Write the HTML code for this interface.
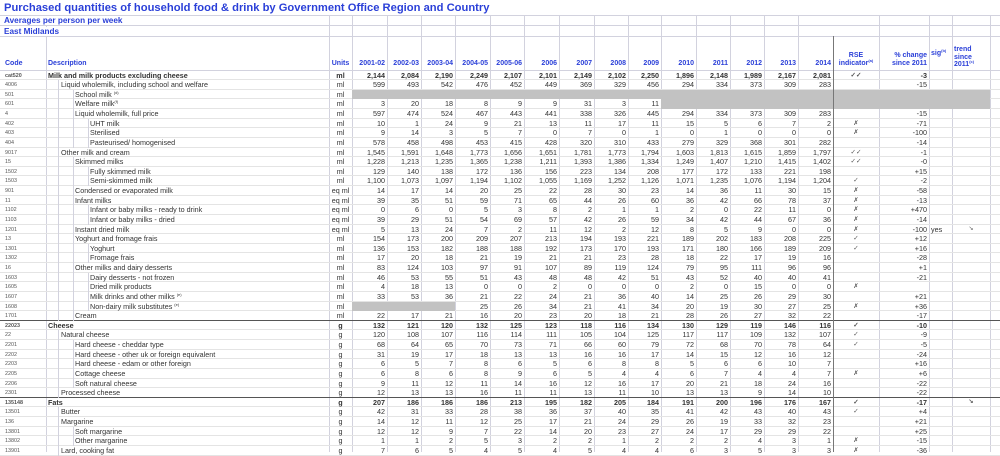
<!DOCTYPE html>
<html><head><meta charset="utf-8"><style>
body{margin:0;width:1000px;height:452px;overflow:hidden;background:#fff;font-family:"Liberation Sans",Arial,sans-serif;position:relative}
.vl{position:absolute;top:15px;bottom:0;width:1px;background:#d2d2de}
.hl{position:absolute;left:0;width:1000px;height:1px;background:#d2d2de}
.tt{position:absolute;left:4px;color:#2a3fd8;font-weight:bold;background:#fff;white-space:nowrap;padding-right:2px}
#d{position:absolute;top:70.5px;left:0;width:1000px}
.r{display:flex;height:9.64px;line-height:9.9px;font-size:7.2px;color:#333;box-shadow:inset 0 -1px 0 #e4e4e4}
.r>i{flex:none;font-style:normal;white-space:nowrap;box-sizing:border-box;overflow:visible;height:9.64px}
.r>i:nth-child(1){width:46px;font-size:5.4px;color:#555;padding-left:5px;line-height:10.5px}
.r>i:nth-child(2){width:283px;padding-left:2px}
.r>i:nth-child(3){width:23px;text-align:center}
.r>i:nth-child(4),.r>i:nth-child(7),.r>i:nth-child(9),.r>i:nth-child(10),.r>i:nth-child(13),.r>i:nth-child(17){width:35px}
.r>i:nth-child(5),.r>i:nth-child(6),.r>i:nth-child(8),.r>i:nth-child(11),.r>i:nth-child(14),.r>i:nth-child(15),.r>i:nth-child(16){width:34px}
.r>i:nth-child(12){width:33px}
.r>i:nth-child(n+4):nth-child(-n+17){text-align:right;padding-right:2px}
.r>i:nth-child(18){width:46px;text-align:center;font-size:6.5px;color:#555}
.r>i:nth-child(19){width:50px;text-align:right;padding-right:2px}
.r>i:nth-child(20){width:23px;padding-left:2px}
.r>i:nth-child(21){width:38px;text-align:center;font-size:6px;color:#666}
.r>i.g{background:#c2c2c2}
.b{font-weight:bold}
.r>i.l1{padding-left:15px;background:linear-gradient(#d2d2de,#d2d2de) 12px 0/1px 100% no-repeat}
.r>i.l2{padding-left:29px;background:linear-gradient(#d2d2de,#d2d2de) 12px 0/1px 100% no-repeat,linear-gradient(#d2d2de,#d2d2de) 27px 0/1px 100% no-repeat}
.r>i.l3{padding-left:44px;background:linear-gradient(#d2d2de,#d2d2de) 12px 0/1px 100% no-repeat,linear-gradient(#d2d2de,#d2d2de) 27px 0/1px 100% no-repeat,linear-gradient(#d2d2de,#d2d2de) 42px 0/1px 100% no-repeat}
.t{box-shadow:inset 0 -1px 0 #555}
sup{font-size:4px;vertical-align:3px;line-height:0}
#h{position:absolute;top:36px;left:0;height:34px;display:flex;align-items:flex-end;font-size:7px;font-weight:bold;color:#2a3fd8}
#h>span{flex:none;box-sizing:border-box;padding-bottom:3px;line-height:7.5px}
.y{text-align:right;padding-right:2px}
</style></head><body>
<div class="vl" style="left:46px"></div><div class="vl" style="left:329px"></div><div class="vl" style="left:352px"></div>
<div class="vl" style="left:387px"></div><div class="vl" style="left:421px"></div><div class="vl" style="left:455px"></div>
<div class="vl" style="left:490px"></div><div class="vl" style="left:524px"></div><div class="vl" style="left:559px"></div>
<div class="vl" style="left:594px"></div><div class="vl" style="left:628px"></div><div class="vl" style="left:661px"></div>
<div class="vl" style="left:696px"></div><div class="vl" style="left:730px"></div><div class="vl" style="left:764px"></div>
<div class="vl" style="left:798px"></div><div class="vl" style="left:879px"></div>
<div class="vl" style="left:929px"></div><div class="vl" style="left:952px"></div><div class="vl" style="left:990px"></div>
<div class="hl" style="top:15px"></div><div class="hl" style="top:25px"></div><div class="hl" style="top:36px"></div><div class="hl" style="top:70px"></div>
<div class="tt" style="top:1.5px;font-size:11.2px;line-height:13px">Purchased quantities of household food &amp; drink by Government Office Region and Country</div>
<div class="tt" style="top:16px;font-size:8.2px;line-height:9px">Averages per person per week</div>
<div class="tt" style="top:26.5px;font-size:8.2px;line-height:9px">East Midlands</div>
<div id="h">
<span style="width:46px;padding-left:5px">Code</span><span style="width:283px;padding-left:2px">Description</span><span style="width:23px;text-align:center">Units</span>
<span class="y" style="width:35px">2001-02</span><span class="y" style="width:34px">2002-03</span><span class="y" style="width:34px">2003-04</span><span class="y" style="width:35px">2004-05</span><span class="y" style="width:34px">2005-06</span><span class="y" style="width:35px">2006</span><span class="y" style="width:35px">2007</span><span class="y" style="width:34px">2008</span><span class="y" style="width:33px">2009</span><span class="y" style="width:35px">2010</span><span class="y" style="width:34px">2011</span><span class="y" style="width:34px">2012</span><span class="y" style="width:34px">2013</span><span class="y" style="width:35px">2014</span>
<span style="width:46px;text-align:center">RSE<br>indicator<sup>(a)</sup></span><span class="y" style="width:50px">% change<br>since 2011</span>
<span style="width:23px;align-self:flex-start;padding:14px 0 0 2px">sig<sup>(b)</sup></span><span style="width:38px;align-self:flex-start;padding:10px 0 0 2px">trend<br>since<br>2011<sup>(c)</sup></span>
</div>
<div id="d">
<div class="r b"><i class="b">cat520</i><i>Milk and milk products excluding cheese</i><i>ml</i><i>2,144</i><i>2,084</i><i>2,190</i><i>2,249</i><i>2,107</i><i>2,101</i><i>2,149</i><i>2,102</i><i>2,250</i><i>1,896</i><i>2,148</i><i>1,989</i><i>2,167</i><i>2,081</i><i>✓✓</i><i>-3</i></div>
<div class="r"><i>4006</i><i class="l1">Liquid wholemilk, including school and welfare</i><i>ml</i><i>599</i><i>493</i><i>542</i><i>476</i><i>452</i><i>449</i><i>369</i><i>329</i><i>456</i><i>294</i><i>334</i><i>373</i><i>309</i><i>283</i><i></i><i>-15</i></div>
<div class="r"><i>501</i><i class="l2">School milk <sup>(d)</sup></i><i>ml</i><i class="g"></i><i class="g"></i><i class="g"></i><i class="g"></i><i class="g"></i><i class="g"></i><i class="g"></i><i class="g"></i><i class="g"></i><i class="g"></i><i class="g"></i><i class="g"></i><i class="g"></i><i class="g"></i><i class="g"></i><i class="g"></i><i class="g"></i><i class="g"></i></div>
<div class="r"><i>601</i><i class="l2">Welfare milk<sup>(f)</sup></i><i>ml</i><i>3</i><i>20</i><i>18</i><i>8</i><i>9</i><i>9</i><i>31</i><i>3</i><i>11</i><i class="g"></i><i class="g"></i><i class="g"></i><i class="g"></i><i class="g"></i><i class="g"></i><i class="g"></i><i class="g"></i><i class="g"></i></div>
<div class="r"><i>4</i><i class="l2">Liquid wholemilk, full price</i><i>ml</i><i>597</i><i>474</i><i>524</i><i>467</i><i>443</i><i>441</i><i>338</i><i>326</i><i>445</i><i>294</i><i>334</i><i>373</i><i>309</i><i>283</i><i></i><i>-15</i></div>
<div class="r"><i>402</i><i class="l3">UHT milk</i><i>ml</i><i>10</i><i>1</i><i>24</i><i>9</i><i>21</i><i>13</i><i>11</i><i>17</i><i>11</i><i>15</i><i>5</i><i>6</i><i>7</i><i>2</i><i>✗</i><i>-71</i></div>
<div class="r"><i>403</i><i class="l3">Sterilised</i><i>ml</i><i>9</i><i>14</i><i>3</i><i>5</i><i>7</i><i>0</i><i>7</i><i>0</i><i>1</i><i>0</i><i>1</i><i>0</i><i>0</i><i>0</i><i>✗</i><i>-100</i></div>
<div class="r"><i>404</i><i class="l3">Pasteurised/ homogenised</i><i>ml</i><i>578</i><i>458</i><i>498</i><i>453</i><i>415</i><i>428</i><i>320</i><i>310</i><i>433</i><i>279</i><i>329</i><i>368</i><i>301</i><i>282</i><i></i><i>-14</i></div>
<div class="r"><i>9017</i><i class="l1">Other milk and cream</i><i>ml</i><i>1,545</i><i>1,591</i><i>1,648</i><i>1,773</i><i>1,656</i><i>1,651</i><i>1,781</i><i>1,773</i><i>1,794</i><i>1,603</i><i>1,813</i><i>1,615</i><i>1,859</i><i>1,797</i><i>✓✓</i><i>-1</i></div>
<div class="r"><i>15</i><i class="l2">Skimmed milks</i><i>ml</i><i>1,228</i><i>1,213</i><i>1,235</i><i>1,365</i><i>1,238</i><i>1,211</i><i>1,393</i><i>1,386</i><i>1,334</i><i>1,249</i><i>1,407</i><i>1,210</i><i>1,415</i><i>1,402</i><i>✓✓</i><i>-0</i></div>
<div class="r"><i>1502</i><i class="l3">Fully skimmed milk</i><i>ml</i><i>129</i><i>140</i><i>138</i><i>172</i><i>136</i><i>156</i><i>223</i><i>134</i><i>208</i><i>177</i><i>172</i><i>133</i><i>221</i><i>198</i><i></i><i>+15</i></div>
<div class="r"><i>1503</i><i class="l3">Semi-skimmed milk</i><i>ml</i><i>1,100</i><i>1,073</i><i>1,097</i><i>1,194</i><i>1,102</i><i>1,055</i><i>1,169</i><i>1,252</i><i>1,126</i><i>1,071</i><i>1,235</i><i>1,076</i><i>1,194</i><i>1,204</i><i>✓</i><i>-2</i></div>
<div class="r"><i>901</i><i class="l2">Condensed or evaporated milk</i><i>eq ml</i><i>14</i><i>17</i><i>14</i><i>20</i><i>25</i><i>22</i><i>28</i><i>30</i><i>23</i><i>14</i><i>36</i><i>11</i><i>30</i><i>15</i><i>✗</i><i>-58</i></div>
<div class="r"><i>11</i><i class="l2">Infant milks</i><i>eq ml</i><i>39</i><i>35</i><i>51</i><i>59</i><i>71</i><i>65</i><i>44</i><i>26</i><i>60</i><i>36</i><i>42</i><i>66</i><i>78</i><i>37</i><i>✗</i><i>-13</i></div>
<div class="r"><i>1102</i><i class="l3">Infant or baby milks - ready to drink</i><i>eq ml</i><i>0</i><i>6</i><i>0</i><i>5</i><i>3</i><i>8</i><i>2</i><i>1</i><i>1</i><i>2</i><i>0</i><i>22</i><i>11</i><i>0</i><i>✗</i><i>+470</i></div>
<div class="r"><i>1103</i><i class="l3">Infant or baby milks - dried</i><i>eq ml</i><i>39</i><i>29</i><i>51</i><i>54</i><i>69</i><i>57</i><i>42</i><i>26</i><i>59</i><i>34</i><i>42</i><i>44</i><i>67</i><i>36</i><i>✗</i><i>-14</i></div>
<div class="r"><i>1201</i><i class="l2">Instant dried milk</i><i>eq ml</i><i>5</i><i>13</i><i>24</i><i>7</i><i>2</i><i>11</i><i>12</i><i>2</i><i>12</i><i>8</i><i>5</i><i>9</i><i>0</i><i>0</i><i>✗</i><i>-100</i><i>yes</i><i>↘</i></div>
<div class="r"><i>13</i><i class="l2">Yoghurt and fromage frais</i><i>ml</i><i>154</i><i>173</i><i>200</i><i>209</i><i>207</i><i>213</i><i>194</i><i>193</i><i>221</i><i>189</i><i>202</i><i>183</i><i>208</i><i>225</i><i>✓</i><i>+12</i></div>
<div class="r"><i>1301</i><i class="l3">Yoghurt</i><i>ml</i><i>136</i><i>153</i><i>182</i><i>188</i><i>188</i><i>192</i><i>173</i><i>170</i><i>193</i><i>171</i><i>180</i><i>166</i><i>189</i><i>209</i><i>✓</i><i>+16</i></div>
<div class="r"><i>1302</i><i class="l3">Fromage frais</i><i>ml</i><i>17</i><i>20</i><i>18</i><i>21</i><i>19</i><i>21</i><i>21</i><i>23</i><i>28</i><i>18</i><i>22</i><i>17</i><i>19</i><i>16</i><i></i><i>-28</i></div>
<div class="r"><i>16</i><i class="l2">Other milks and dairy desserts</i><i>ml</i><i>83</i><i>124</i><i>103</i><i>97</i><i>91</i><i>107</i><i>89</i><i>119</i><i>124</i><i>79</i><i>95</i><i>111</i><i>96</i><i>96</i><i></i><i>+1</i></div>
<div class="r"><i>1603</i><i class="l3">Dairy desserts - not frozen</i><i>ml</i><i>46</i><i>53</i><i>55</i><i>51</i><i>43</i><i>48</i><i>48</i><i>42</i><i>51</i><i>43</i><i>52</i><i>40</i><i>40</i><i>41</i><i></i><i>-21</i></div>
<div class="r"><i>1605</i><i class="l3">Dried milk products</i><i>ml</i><i>4</i><i>18</i><i>13</i><i>0</i><i>0</i><i>2</i><i>0</i><i>0</i><i>0</i><i>2</i><i>0</i><i>15</i><i>0</i><i>0</i><i>✗</i><i></i></div>
<div class="r"><i>1607</i><i class="l3">Milk drinks and other milks <sup>(e)</sup></i><i>ml</i><i>33</i><i>53</i><i>36</i><i>21</i><i>22</i><i>24</i><i>21</i><i>36</i><i>40</i><i>14</i><i>25</i><i>26</i><i>29</i><i>30</i><i></i><i>+21</i></div>
<div class="r"><i>1608</i><i class="l3">Non-dairy milk substitutes <sup>(e)</sup></i><i>ml</i><i class="g"></i><i class="g"></i><i class="g"></i><i>25</i><i>26</i><i>34</i><i>21</i><i>41</i><i>34</i><i>20</i><i>19</i><i>30</i><i>27</i><i>25</i><i>✗</i><i>+36</i></div>
<div class="r t"><i>1701</i><i class="l2">Cream</i><i>ml</i><i>22</i><i>17</i><i>21</i><i>16</i><i>20</i><i>23</i><i>20</i><i>18</i><i>21</i><i>28</i><i>26</i><i>27</i><i>32</i><i>22</i><i></i><i>-17</i></div>
<div class="r b"><i class="b">22023</i><i>Cheese</i><i>g</i><i>132</i><i>121</i><i>120</i><i>132</i><i>125</i><i>123</i><i>118</i><i>116</i><i>134</i><i>130</i><i>129</i><i>119</i><i>146</i><i>116</i><i>✓</i><i>-10</i></div>
<div class="r"><i>22</i><i class="l1">Natural cheese</i><i>g</i><i>120</i><i>108</i><i>107</i><i>116</i><i>114</i><i>111</i><i>105</i><i>104</i><i>125</i><i>117</i><i>117</i><i>109</i><i>132</i><i>107</i><i>✓</i><i>-9</i></div>
<div class="r"><i>2201</i><i class="l2">Hard cheese - cheddar type</i><i>g</i><i>68</i><i>64</i><i>65</i><i>70</i><i>73</i><i>71</i><i>66</i><i>60</i><i>79</i><i>72</i><i>68</i><i>70</i><i>78</i><i>64</i><i>✓</i><i>-5</i></div>
<div class="r"><i>2202</i><i class="l2">Hard cheese - other uk or foreign equivalent</i><i>g</i><i>31</i><i>19</i><i>17</i><i>18</i><i>13</i><i>13</i><i>16</i><i>16</i><i>17</i><i>14</i><i>15</i><i>12</i><i>16</i><i>12</i><i></i><i>-24</i></div>
<div class="r"><i>2203</i><i class="l2">Hard cheese - edam or other foreign</i><i>g</i><i>6</i><i>5</i><i>7</i><i>8</i><i>6</i><i>5</i><i>6</i><i>8</i><i>8</i><i>5</i><i>6</i><i>6</i><i>10</i><i>7</i><i></i><i>+16</i></div>
<div class="r"><i>2205</i><i class="l2">Cottage cheese</i><i>g</i><i>6</i><i>8</i><i>6</i><i>8</i><i>9</i><i>6</i><i>5</i><i>4</i><i>4</i><i>6</i><i>7</i><i>4</i><i>4</i><i>7</i><i>✗</i><i>+6</i></div>
<div class="r"><i>2206</i><i class="l2">Soft natural cheese</i><i>g</i><i>9</i><i>11</i><i>12</i><i>11</i><i>14</i><i>16</i><i>12</i><i>16</i><i>17</i><i>20</i><i>21</i><i>18</i><i>24</i><i>16</i><i></i><i>-22</i></div>
<div class="r t"><i>2301</i><i class="l1">Processed cheese</i><i>g</i><i>12</i><i>13</i><i>13</i><i>16</i><i>11</i><i>11</i><i>13</i><i>11</i><i>10</i><i>13</i><i>13</i><i>9</i><i>14</i><i>10</i><i></i><i>-22</i></div>
<div class="r b"><i class="b">135148</i><i>Fats</i><i>g</i><i>207</i><i>186</i><i>186</i><i>186</i><i>213</i><i>195</i><i>182</i><i>205</i><i>184</i><i>191</i><i>200</i><i>196</i><i>176</i><i>167</i><i>✓</i><i>-17</i><i></i><i>↘</i></div>
<div class="r"><i>13501</i><i class="l1">Butter</i><i>g</i><i>42</i><i>31</i><i>33</i><i>28</i><i>38</i><i>36</i><i>37</i><i>40</i><i>35</i><i>41</i><i>42</i><i>43</i><i>40</i><i>43</i><i>✓</i><i>+4</i></div>
<div class="r"><i>136</i><i class="l1">Margarine</i><i>g</i><i>14</i><i>12</i><i>11</i><i>12</i><i>25</i><i>17</i><i>21</i><i>24</i><i>29</i><i>26</i><i>19</i><i>33</i><i>32</i><i>23</i><i></i><i>+21</i></div>
<div class="r"><i>13801</i><i class="l2">Soft margarine</i><i>g</i><i>12</i><i>12</i><i>9</i><i>7</i><i>22</i><i>14</i><i>20</i><i>23</i><i>27</i><i>24</i><i>17</i><i>29</i><i>29</i><i>22</i><i></i><i>+25</i></div>
<div class="r"><i>13802</i><i class="l2">Other margarine</i><i>g</i><i>1</i><i>1</i><i>2</i><i>5</i><i>3</i><i>2</i><i>2</i><i>1</i><i>2</i><i>2</i><i>2</i><i>4</i><i>3</i><i>1</i><i>✗</i><i>-15</i></div>
<div class="r"><i>13901</i><i class="l1">Lard, cooking fat</i><i>g</i><i>7</i><i>6</i><i>5</i><i>4</i><i>5</i><i>4</i><i>5</i><i>4</i><i>4</i><i>6</i><i>3</i><i>5</i><i>3</i><i>3</i><i>✗</i><i>-36</i></div>
</div>
<div style="position:absolute;left:832.5px;top:36px;bottom:0;width:1.5px;background:#777"></div>
</body></html>
